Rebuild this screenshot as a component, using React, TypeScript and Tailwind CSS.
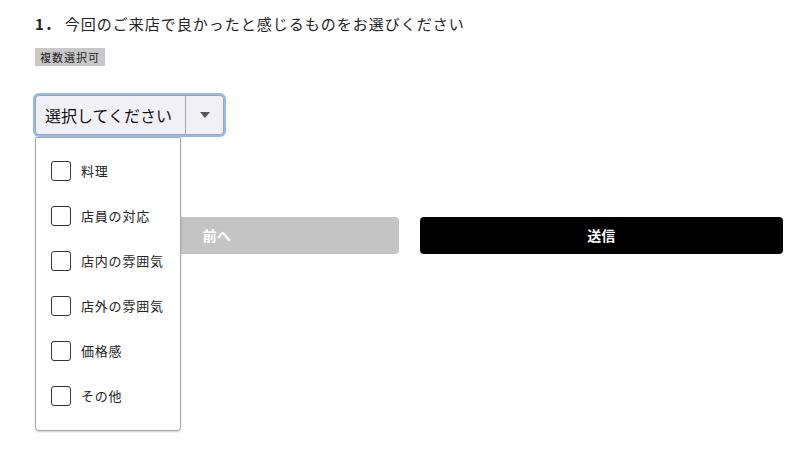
import { useState } from 'react';

const OPTIONS = ['料理', '店員の対応', '店内の雰囲気', '店外の雰囲気', '価格感', 'その他'];

const App = () => {
  const [checked, setChecked] = useState<string[]>([]);

  const toggle = (opt: string) => {
    setChecked((prev) => (prev.includes(opt) ? prev.filter((o) => o !== opt) : [...prev, opt]));
  };

  return (
    <div
      className="min-h-[460px] w-[809px] bg-white text-[#222]"
      style={{ fontFamily: '"Noto Sans CJK JP", "Noto Sans", sans-serif' }}
    >
      <div className="w-[783px] pl-[35px] pt-[14px]">
        {/* Question title */}
        <h2 className="flex items-center text-[15px] leading-[20px] tracking-[1px]">
          <span className="font-bold">1．</span>
          <span className="ml-[4px]">今回のご来店で良かったと感じるものをお選びください</span>
        </h2>

        {/* Badge */}
        <div className="mt-[14px] inline-block bg-[#c8c8c8] px-[5px] text-[11px] leading-[18px] tracking-[1px] text-[#222]">
          複数選択可
        </div>

        {/* Select */}
        <div className="relative -ml-[2px] mt-[26px] w-fit">
          <div className="rounded-[6px] p-[2px] bg-[#8fbcf7]">
            <div className="flex h-[40px] w-[189px] items-center rounded-[4px] border border-[#a3a3aa] bg-[#f1f0f6]">
              <span className="flex-1 pl-[9px] text-[16px] text-[#111]">選択してください</span>
              <span className="flex h-full w-[38px] items-center justify-center border-l border-[#a3a3aa]">
                <span className="h-0 w-0 border-x-[5px] border-t-[6px] border-x-transparent border-t-[#555]" />
              </span>
            </div>
          </div>

          {/* Dropdown panel */}
          <div className="absolute left-[2px] top-[44px] z-10 w-[146px] rounded-b-[4px] border border-[#a8a8b0] bg-white pb-[24px] pt-[23px] shadow-[0_1px_2px_rgba(0,0,0,0.2)]">
            <div className="flex flex-col gap-[25px]">
              {OPTIONS.map((opt) => (
                <label key={opt} className="flex cursor-pointer items-center pl-[15px]">
                  <span
                    onClick={() => toggle(opt)}
                    className="flex h-[20px] w-[20px] items-center justify-center rounded-[3px] border-[1.5px] border-[#333] bg-white"
                  >
                    {checked.includes(opt) && <span className="h-[10px] w-[10px] rounded-[1px] bg-[#333]" />}
                  </span>
                  <span className="ml-[10px] text-[13px] tracking-[0.8px] text-[#222]">{opt}</span>
                </label>
              ))}
            </div>
          </div>
        </div>

        {/* Buttons */}
        <div className="mt-[80px] grid grid-cols-2 gap-[21px]">
          <button className="h-[37px] rounded-[4px] bg-[#c4c4c4] text-[14px] font-bold text-white">前へ</button>
          <button className="h-[37px] rounded-[4px] bg-black text-[14px] font-bold text-white">送信</button>
        </div>
      </div>
    </div>
  );
};

export default App;
